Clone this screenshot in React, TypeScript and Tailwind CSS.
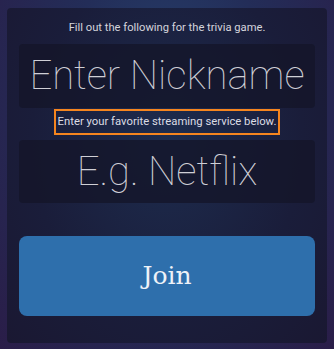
export default function App() {
  return (
    <div className="w-[334px] h-[349px] overflow-hidden bg-[radial-gradient(ellipse_at_50%_30%,#26426e_0%,#232d58_45%,#2a1d48_100%)] px-[7px] pt-[8px] font-['Roboto','Liberation_Sans',sans-serif]">
      <div className="h-[335px] rounded-[4px] bg-[radial-gradient(ellipse_at_50%_40%,#1d2c4e_0%,#1a1d3a_60%,#1a1832_100%)] px-[12px] pt-[13px]">
        <p className="text-center text-[11.2px] leading-[14px] text-[#d4d4dc]">
          Fill out the following for the trivia game.
        </p>
        <div className="mt-[9px] flex h-[64px] items-center justify-center rounded-[4px] bg-[#141529]/80">
          <span className="text-[40px] font-thin leading-none text-[#cfcfd6]">Enter Nickname</span>
        </div>
        <div className="mt-[1px] flex justify-center">
          <span className="border-2 border-[#f5851f] px-[2px] text-[11.3px] leading-[22px] text-[#dcdce4]">
            Enter your favorite streaming service below.
          </span>
        </div>
        <div className="mt-[5px] flex h-[63px] items-center justify-center rounded-[4px] bg-[#141529]/80">
          <span className="text-[40px] font-thin leading-none text-[#cfcfd6]">E.g. Netflix</span>
        </div>
        <button className="mt-[33px] flex h-[80px] w-full items-center justify-center rounded-[8px] bg-[#2e6fac] font-['DejaVu_Serif','Liberation_Serif',serif] text-[25px] text-[#eef2f8]">
          Join
        </button>
      </div>
    </div>
  );
}
